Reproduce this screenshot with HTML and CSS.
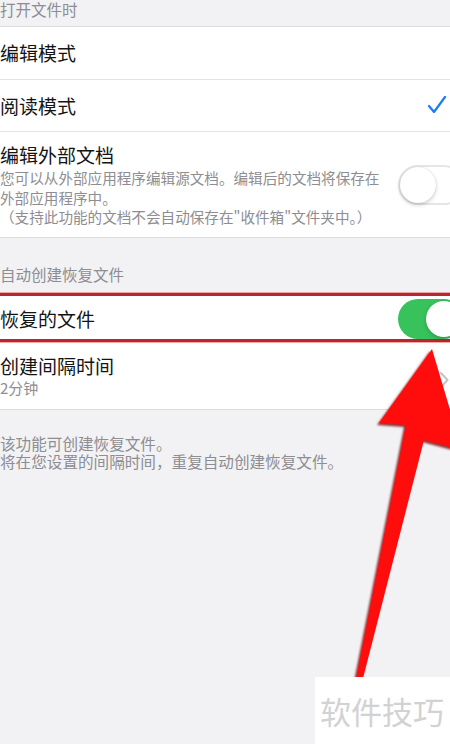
FILE: index.html
```html
<!DOCTYPE html>
<html lang="zh-CN">
<head>
<meta charset="utf-8">
<title>设置</title>
<link rel="stylesheet" href="styles.css">
</head>
<body>
<div class="page">
  <div class="hdr hdr-top">打开文件时</div>
  <div class="list">
    <div class="row row-edit"><span class="title">编辑模式</span></div>
    <div class="row row-read">
      <span class="title">阅读模式</span>
      <svg class="check" width="20" height="20" viewBox="0 0 20 20"><polyline points="2,10 7,16 18,1" fill="none" stroke="#1a7cf5" stroke-width="2.2" stroke-linecap="round" stroke-linejoin="round"/></svg>
    </div>
    <div class="row row-ext">
      <div class="text">
        <div class="title">编辑外部文档</div>
        <div class="desc">您可以从外部应用程序编辑源文档。编辑后的文档将保存在外部应用程序中。<br>（支持此功能的文档不会自动保存在"收件箱"文件夹中。）</div>
      </div>
      <div class="toggle off"><span class="knob"></span></div>
    </div>
  </div>
  <div class="hdr hdr-gap">自动创建恢复文件</div>
  <div class="list list2">
    <div class="highlight">
      <div class="row row-rec">
        <span class="title">恢复的文件</span>
        <div class="toggle on"><span class="knob"></span></div>
      </div>
    </div>
    <div class="row row-int">
      <div class="text">
        <div class="title">创建间隔时间</div>
        <div class="sub">2分钟</div>
      </div>
      <svg class="chev" width="10" height="16" viewBox="0 0 10 16"><polyline points="1,1 7.5,8 1,15" fill="none" stroke="#c4c4c8" stroke-width="2" stroke-linecap="round" stroke-linejoin="round"/></svg>
    </div>
  </div>
  <div class="foot">
    <div>该功能可创建恢复文件。</div>
    <div>将在您设置的间隔时间，重复自动创建恢复文件。</div>
  </div>

  <svg class="arrow" width="450" height="744" viewBox="0 0 450 744">
    <defs>
      <filter id="sh" x="-20%" y="-20%" width="140%" height="140%">
        <feDropShadow dx="-2" dy="2" stdDeviation="1.2" flood-color="#7a0000" flood-opacity="0.8"/>
      </filter>
    </defs>
    <polygon filter="url(#sh)" fill="#ff0a0a" points="432,349 462,450 424,440 360,690 354,690 406,425 379,423"/>
  </svg>
  <div class="watermark">软件技巧</div>
</div>
</body>
</html>
```
FILE: styles.css
```css
* { box-sizing: border-box; }
html, body { margin: 0; padding: 0; }
body {
  width: 450px;
  height: 744px;
  overflow: hidden;
  background: #f2f2f4;
  font-family: "Noto Sans CJK SC", "Noto Sans", sans-serif;
  color: #111;
}
.page {
  position: relative;
  width: 450px;
  height: 744px;
}
.hdr {
  color: #8d8d92;
  font-size: 15.5px;
  line-height: 18px;
}
.hdr-top {
  height: 26px;
}
.hdr-gap {
  height: 55px;
  display: flex;
  align-items: flex-end;
  padding-bottom: 10px;
}
.list {
  background: #fff;
  border-top: 1px solid #dcdcde;
  border-bottom: 1px solid #dcdcde;
}
.row {
  display: flex;
  align-items: center;
  justify-content: space-between;
}
.row + .row { border-top: 1px solid #e2e2e4; }
.title {
  font-size: 19px;
  line-height: 24px;
  color: #141414;
}
.row-edit { height: 52px; }
.row-read { height: 52px; }
.check { margin-right: 3px; }
.row-ext {
  height: 106px;
  padding-top: 11px;
  padding-bottom: 10px;
  align-items: center;
}
.row-ext .text { align-self: flex-start; }
.desc {
  width: 392px;
  font-size: 14.6px;
  line-height: 19.5px;
  color: #8d8d92;
  margin-top: 1px;
}
.toggle {
  position: relative;
  flex: none;
  width: 66px;
  height: 40px;
  border-radius: 20px;
  margin-right: -14px;
}
.toggle.off {
  background: #fff;
  border: 2px solid #e6e6e9;
}
.toggle.on {
  background: #37c25c;
}
.knob {
  position: absolute;
  width: 36px;
  height: 36px;
  border-radius: 50%;
  background: #fff;
  box-shadow: 0 2px 4px rgba(0,0,0,0.18), 0 0 1px rgba(0,0,0,0.2);
}
.toggle.off .knob { left: 0; top: 0; }
.toggle.on .knob { right: 2px; top: 2px; }

.list2 { border-top: none; }
.highlight {
  border-top: 3px solid #b8272d;
  border-bottom: 3px solid #b8272d;
  box-shadow: 0 -1px 0 rgba(235,110,110,0.6), 0 1px 0 rgba(235,110,110,0.6);
}
.row-rec {
  height: 43px;
  padding-top: 2px;
}
.row-int {
  height: 67px;
  padding-top: 12px;
  padding-bottom: 8px;
  border-top: none;
}
.row-int .text { align-self: flex-start; }
.sub {
  font-size: 15px;
  line-height: 20px;
  color: #8d8d92;
}
.chev { margin-right: 0; margin-top: 4px; }
.foot {
  padding-top: 24px;
  font-size: 15.6px;
  line-height: 18px;
  color: #8d8d92;
  display: flex;
  flex-direction: column;
  gap: 0;
}
.arrow {
  position: absolute;
  left: 0;
  top: 0;
  pointer-events: none;
}
.watermark {
  position: absolute;
  left: 315px;
  top: 677px;
  width: 135px;
  height: 67px;
  background: #fff;
  color: #d2d2d2;
  font-size: 31px;
  line-height: 67px;
  padding-left: 5px;
  padding-bottom: 4px;
  letter-spacing: 0;
}
```
